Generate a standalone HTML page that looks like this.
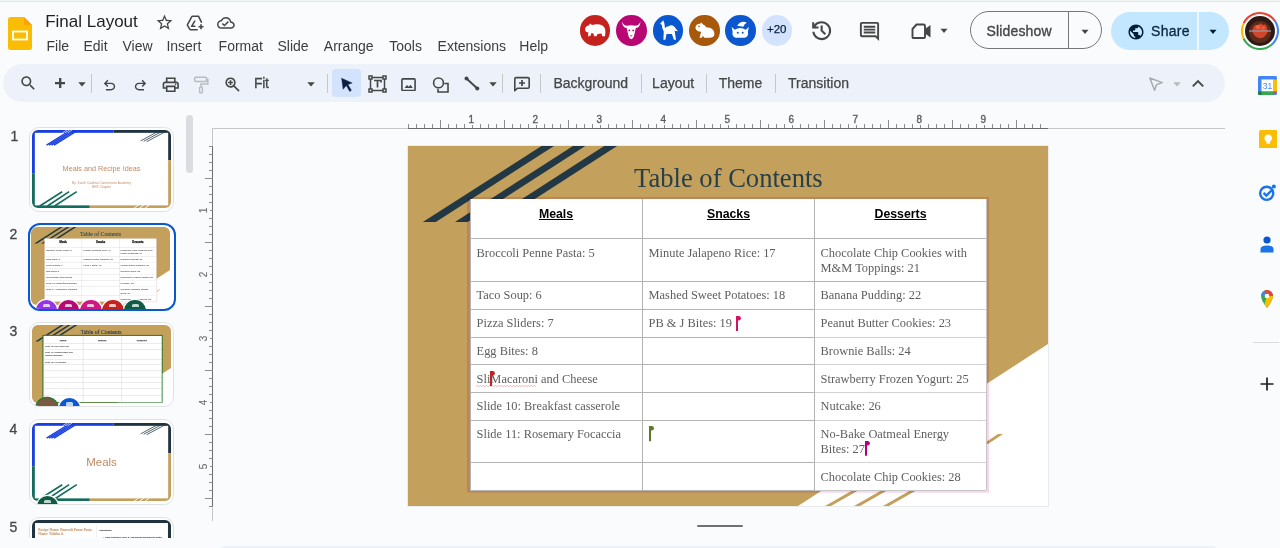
<!DOCTYPE html>
<html><head><meta charset="utf-8"><title>Final Layout - Google Slides</title>
<style>
html,body{margin:0;padding:0;-webkit-font-smoothing:antialiased;}
body{width:1280px;height:548px;overflow:hidden;position:relative;background:#f9fbfd;font-family:'Liberation Sans', sans-serif;}
.r{position:absolute;}
.t{position:absolute;white-space:nowrap;}
</style></head><body>
<div style="position:absolute;left:0;top:0;width:1280px;height:548px;will-change:transform;"><div class="r" style="left:0px;top:0px;width:1280px;height:1px;background:#f1f7f4;"></div><div class="r" style="left:0px;top:1px;width:1280px;height:1px;background:#dfe6e4;"></div><svg class="r" style="left:8px;top:17px;" width="24" height="33" viewBox="0 0 24 33"><path d="M0 2.5 Q0 0 2.5 0 L16 0 L24 8 L24 30.5 Q24 33 21.5 33 L2.5 33 Q0 33 0 30.5 Z" fill="#fbbc04"/>
<path d="M16 0 L24 8 L16 8 Z" fill="#f9a300"/>
<rect x="5" y="14.5" width="14" height="8" fill="none" stroke="#fff" stroke-width="1.8"/></svg><div class="t" style="left:45.2px;top:12.91px;font-size:17px;line-height:17px;color:#1f1f1f;font-weight:normal;font-family:'Liberation Sans', sans-serif;">Final Layout</div><svg class="r" style="left:155px;top:13px;" width="19" height="19" viewBox="0 0 24 24"><path fill="#444746" d="M22 9.24l-7.19-.62L12 2 9.19 8.63 2 9.24l5.46 4.73L5.82 21 12 17.27 18.18 21l-1.63-7.03L22 9.24zM12 15.4l-3.76 2.27 1-4.28-3.32-2.88 4.38-.38L12 6.1l1.71 4.04 4.38.38-3.32 2.88 1 4.28L12 15.4z"/></svg><svg class="r" style="left:186px;top:15px;" width="18" height="16" viewBox="0 0 18 16"><path d="M12.6 1.3 H6.4 Q6 1.3 5.8 1.7 L1.5 9.6 Q1.3 10 1.5 10.4 L3.9 14.3 Q4.1 14.7 4.5 14.7 H11.2 M12.6 1.3 L15.4 7.2" fill="none" stroke="#444746" stroke-width="1.55" stroke-linejoin="round" stroke-linecap="round"/>
<path d="M9 5.6 L5.6 11.3 H9.4" fill="none" stroke="#444746" stroke-width="1.5" stroke-linejoin="round"/>
<path d="M15 9.2 V14.3 M12.5 11.75 H17.5" stroke="#444746" stroke-width="1.6"/></svg><svg class="r" style="left:216.8px;top:14.2px;" width="17.8" height="17.8" viewBox="0 0 24 24"><path fill="#444746" d="M19.35 10.04C18.67 6.59 15.64 4 12 4 9.11 4 6.6 5.64 5.35 8.04 2.34 8.36 0 10.91 0 14c0 3.310 2.69 6 6 6h13c2.76 0 5-2.24 5-5 0-2.64-2.05-4.78-4.65-4.960zM19 18H6c-2.21 0-4-1.79-4-4 0-2.05 1.53-3.76 3.56-3.97l1.07-.11.5-.95C8.08 7.14 9.94 6 12 6c2.62 0 4.88 1.86 5.39 4.43l.3 1.5 1.53.11c1.56.1 2.78 1.410 2.78 2.96 0 1.65-1.35 3-3 3zm-9-3.82l-2.09-2.09L6.5 13.5 10 17l6.01-6.01-1.41-1.41z"/></svg><div class="t" style="left:46.5px;top:38.85px;font-size:14px;line-height:14px;color:#3b3e3d;font-weight:normal;font-family:'Liberation Sans', sans-serif;">File</div><div class="t" style="left:83.5px;top:38.85px;font-size:14px;line-height:14px;color:#3b3e3d;font-weight:normal;font-family:'Liberation Sans', sans-serif;">Edit</div><div class="t" style="left:122.5px;top:38.85px;font-size:14px;line-height:14px;color:#3b3e3d;font-weight:normal;font-family:'Liberation Sans', sans-serif;">View</div><div class="t" style="left:166.4px;top:38.85px;font-size:14px;line-height:14px;color:#3b3e3d;font-weight:normal;font-family:'Liberation Sans', sans-serif;">Insert</div><div class="t" style="left:218.60000000000002px;top:38.85px;font-size:14px;line-height:14px;color:#3b3e3d;font-weight:normal;font-family:'Liberation Sans', sans-serif;">Format</div><div class="t" style="left:277.5px;top:38.85px;font-size:14px;line-height:14px;color:#3b3e3d;font-weight:normal;font-family:'Liberation Sans', sans-serif;">Slide</div><div class="t" style="left:323.8px;top:38.85px;font-size:14px;line-height:14px;color:#3b3e3d;font-weight:normal;font-family:'Liberation Sans', sans-serif;">Arrange</div><div class="t" style="left:389.3px;top:38.85px;font-size:14px;line-height:14px;color:#3b3e3d;font-weight:normal;font-family:'Liberation Sans', sans-serif;">Tools</div><div class="t" style="left:437.55px;top:38.85px;font-size:14px;line-height:14px;color:#3b3e3d;font-weight:normal;font-family:'Liberation Sans', sans-serif;">Extensions</div><div class="t" style="left:519.3px;top:38.85px;font-size:14px;line-height:14px;color:#3b3e3d;font-weight:normal;font-family:'Liberation Sans', sans-serif;">Help</div><div class="r" style="left:579.75px;top:15.4px;width:30.5px;height:30.5px;border-radius:50%;background:#c5221f;"></div><div class="r" style="left:616.25px;top:15.4px;width:30.5px;height:30.5px;border-radius:50%;background:#b80672;"></div><div class="r" style="left:652.75px;top:15.4px;width:30.5px;height:30.5px;border-radius:50%;background:#0b57d0;"></div><div class="r" style="left:689.25px;top:15.4px;width:30.5px;height:30.5px;border-radius:50%;background:#a8580a;"></div><div class="r" style="left:725.45px;top:15.4px;width:30.5px;height:30.5px;border-radius:50%;background:#0b57d0;"></div><svg class="r" style="left:579.75px;top:15.4px;" width="30.5" height="30.5" viewBox="0 0 30 30"><path fill="#fff" d="M5 14.5 Q5 10.5 9 10 L10 8.3 L11.8 9.8 Q18 8.3 22 10.3 Q25.2 12.5 25 17 L24.6 20.8 L21.8 20.8 L21.2 18.3 L17.2 18.8 L16.6 20.8 L13.8 20.8 L13.2 18.3 L11.2 17.8 L10.3 20.8 L7.8 20.8 L8.2 17 Q5.4 17 5 14.5 Z"/><path d="M9 20.8 H14 M16 20.8 H21" stroke="#c5221f" stroke-width="0.8"/></svg><svg class="r" style="left:616.25px;top:15.4px;" width="30.5" height="30.5" viewBox="0 0 30 30"><path fill="#fff" d="M6 6.3 Q6 12.3 10.5 12.8 L12 19.5 Q13 23.8 15 23.8 Q17 23.8 18 19.5 L19.5 12.8 Q24 12.3 24 6.3 Q22.5 10.6 19 10.6 Q15 9.6 11 10.6 Q7.5 10.6 6 6.3 Z"/><circle cx="13.1" cy="15.2" r=".9" fill="#b80672"/><circle cx="16.9" cy="15.2" r=".9" fill="#b80672"/><path d="M14 20.5 H16" stroke="#b80672" stroke-width="0.9"/></svg><svg class="r" style="left:652.75px;top:15.4px;" width="30.5" height="30.5" viewBox="0 0 30 30"><path fill="#fff" d="M7 8.5 L10 5.2 L11.2 8 L11.8 13 Q13 11 15.5 11 Q18 8.8 20.8 11.3 L24.5 16 L21.3 15.6 L22.6 24.3 L20.6 24.3 L18.6 18.6 L13.3 18.6 L12.2 24.3 L10.2 24.3 L10.6 16.3 Q8.5 13 8.8 9.8 Z"/></svg><svg class="r" style="left:689.25px;top:15.4px;" width="30.5" height="30.5" viewBox="0 0 30 30"><path fill="#fff" d="M6.3 12.5 Q6.8 8.5 10.8 8.5 L12.3 7.3 L13.5 9 Q16 10 17 12 Q24.2 12 25 18 Q25.2 22.3 21 22.3 L15 22.3 L13.6 20.3 L12.6 22.3 L10.4 22.3 L12 16.5 Q7 16.2 6.3 12.5 Z"/><circle cx="9.8" cy="11.2" r=".8" fill="#a8580a"/></svg><svg class="r" style="left:725.45px;top:15.4px;" width="30.5" height="30.5" viewBox="0 0 30 30"><path fill="#fff" d="M9.5 14.5 Q15 11 20.5 14.5 L23.5 11.5 L22.5 16.5 Q23.5 21.5 19.5 22.3 L10.5 22.3 Q6.5 21.5 7.5 16.5 L6.5 11.5 Z M12 10.5 Q15.5 5 21.5 7.5 Q19 8.5 18 11.5 Z M7 23.5 L11 22 M23 23.5 L19 22"/><circle cx="12.6" cy="17.5" r="1" fill="#0b57d0"/><circle cx="17.4" cy="17.5" r="1" fill="#0b57d0"/></svg><div class="r" style="left:761.5px;top:15.4px;width:30.5px;height:30.5px;border-radius:50%;background:#d3e3fd;"></div><div class="t" style="left:761.5px;width:30.5px;text-align:center;top:24.37px;font-size:11.5px;line-height:11.5px;color:#041e49;-webkit-text-stroke:0.25px #041e49;">+20</div><svg class="r" style="left:808.8px;top:17.6px;" width="25.3" height="25.3" viewBox="0 -960 960 960"><path fill="#444746" d="M480-120q-138 0-240.5-91.5T122-440h82q14 104 92.5 172T480-200q117 0 198.5-81.5T760-480q0-117-81.5-198.5T480-760q-69 0-129 32t-101 88h110v80H120v-240h80v94q51-64 124.5-99T480-840q75 0 140.5 28.5t114 77q48.5 48.5 77 114T840-480q0 75-28.5 140.5t-77 114q-48.5 48.5-114 77T480-120Zm112-192L440-464v-216h80v184l128 128-56 56Z"/></svg><svg class="r" style="left:858px;top:20px;" width="23" height="23" viewBox="0 0 24 24"><path fill="#444746" d="M21.99 4c0-1.1-.89-2-1.99-2H4c-1.1 0-2 .9-2 2v12c0 1.1.9 2 2 2h14l4 4-.01-18zM20 4v13.17L18.83 16H4V4h16zM6 12h12v2H6zm0-3h12v2H6zm0-3h12v2H6z"/></svg><svg class="r" style="left:911px;top:23px;" width="21" height="17" viewBox="0 0 21 17"><path d="M5.5 1.5 H12.5 Q14 1.5 14 3 V14 Q14 15 13 15 H2.5 Q1.5 15 1.5 14 V6 Z" fill="none" stroke="#444746" stroke-width="1.9" stroke-linejoin="round"/><path d="M14 6 L19.5 2 V14.5 L14 10.5 Z" fill="#444746"/></svg><svg class="r" style="left:940.3px;top:27.8px;" width="8" height="6" viewBox="0 0 8 6"><path d="M0.5 0.8 L7.5 0.8 L4 5 Z" fill="#444746"/></svg><div class="r" style="left:969.8px;top:11.2px;width:132.5px;height:38.2px;box-sizing:border-box;border:1px solid #747775;border-radius:19px;"></div><div class="r" style="left:1068.3px;top:11.5px;width:1px;height:37.5px;background:#747775;"></div><div class="t" style="left:986.5px;top:24.15px;font-size:14px;line-height:14px;color:#444746;font-weight:normal;font-family:'Liberation Sans', sans-serif;letter-spacing:0.15px;-webkit-text-stroke:0.35px #444746;">Slideshow</div><svg class="r" style="left:1081px;top:28.6px;" width="8" height="6" viewBox="0 0 8 6"><path d="M0.5 0.8 L7.5 0.8 L4 5 Z" fill="#444746"/></svg><div class="r" style="left:1110.5px;top:11.5px;width:118.5px;height:38px;border-radius:19px;background:#c2e7ff;"></div><div class="r" style="left:1197px;top:11.5px;width:1.5px;height:38px;background:#f9fbfd;opacity:0.8;"></div><svg class="r" style="left:1127px;top:22.5px;" width="18" height="18" viewBox="0 0 24 24"><path fill="#001d35" d="M12 2C6.48 2 2 6.48 2 12s4.48 10 10 10 10-4.48 10-10S17.52 2 12 2zm-1 17.93c-3.95-.49-7-3.85-7-7.93 0-.62.08-1.21.21-1.79L9 15v1c0 1.1.9 2 2 2v1.93zm6.9-2.54c-.26-.81-1-1.39-1.9-1.39h-1v-3c0-.55-.45-1-1-1H8v-2h2c.55 0 1-.45 1-1V7h2c1.1 0 2-.9 2-2v-.41c2.93 1.19 5 4.06 5 7.41 0 2.08-.8 3.97-2.1 5.39z"/></svg><div class="t" style="left:1151px;top:24.15px;font-size:14px;line-height:14px;color:#0a2540;font-weight:normal;font-family:'Liberation Sans', sans-serif;letter-spacing:0.3px;-webkit-text-stroke:0.3px #0a2540;">Share</div><svg class="r" style="left:1209px;top:28.6px;" width="8" height="6" viewBox="0 0 8 6"><path d="M0.5 0.8 L7.5 0.8 L4 5 Z" fill="#001d35"/></svg><svg class="r" style="left:1240px;top:10.6px;" width="40" height="40" viewBox="0 0 40 40"><g fill="none" stroke-width="2.1">
<circle cx="20" cy="20" r="18" stroke="#ea4335" stroke-dasharray="37.7 200" transform="rotate(205 20 20)"/>
<circle cx="20" cy="20" r="18" stroke="#4285f4" stroke-dasharray="26.7 200" transform="rotate(325 20 20)"/>
<circle cx="20" cy="20" r="18" stroke="#34a853" stroke-dasharray="33 200" transform="rotate(50 20 20)"/>
<circle cx="20" cy="20" r="18" stroke="#fbbc04" stroke-dasharray="15.8 200" transform="rotate(155 20 20)"/>
</g>
<circle cx="20" cy="20" r="15" fill="#2e1a14"/>
<circle cx="20" cy="21" r="11" fill="#5a2a1a"/>
<path d="M13 17 Q15 12 18 15 Q20 10 23 14 Q26 12 27 17 Q29 22 24 26 Q20 29 15 25 Q11 21 13 17 Z" fill="#d2452a"/>
<path d="M9 20 H31" stroke="#9a9aa8" stroke-width="1.6" opacity="0.8"/>
<circle cx="18" cy="16" r="2.2" fill="#f06040"/><circle cx="23" cy="17" r="2" fill="#e85a38"/></svg><div class="r" style="left:3px;top:64px;width:1222px;height:38px;border-radius:19px;background:#edf2fa;"></div><svg class="r" style="left:19.2px;top:74.2px;" width="18.5" height="18.5" viewBox="0 0 24 24"><path fill="#444746" d="M15.5 14h-.79l-.28-.27C15.41 12.59 16 11.11 16 9.5 16 5.91 13.09 3 9.5 3S3 5.91 3 9.5 5.91 16 9.5 16c1.61 0 3.09-.59 4.23-1.57l.27.28v.79l5 4.99L20.49 19l-4.99-5zm-6 0C7.01 14 5 11.99 5 9.5S7.01 5 9.5 5 14 7.01 14 9.5 11.99 14 9.5 14z"/></svg><svg class="r" style="left:55px;top:78px;" width="10.4" height="10.4" viewBox="0 0 10.4 10.4"><path d="M0 5.2 H10.4 M5.2 0 V10.4" stroke="#444746" stroke-width="2.3"/></svg><svg class="r" style="left:77.5px;top:81.8px;" width="8" height="5" viewBox="0 0 8 5"><path d="M0.3 0.3 L7.7 0.3 L4 4.6 Z" fill="#444746"/></svg><div class="r" style="left:91px;top:73.5px;width:1px;height:19px;background:#c7c7c7;"></div><svg class="r" style="left:101.2px;top:76.5px;" width="17" height="17" viewBox="0 -960 960 960"><path fill="#444746" d="M280-200v-80h284q63 0 109.5-40T720-420q0-60-46.5-100T564-560H312l104 104-56 56-200-200 200-200 56 56-104 104h252q97 0 166.5 63T800-420q0 94-69.5 157T564-200H280Z"/></svg><svg class="r" style="left:132.3px;top:76.5px;" width="17" height="17" viewBox="0 -960 960 960"><path fill="#444746" d="M396-200q-97 0-166.5-63T160-420q0-94 69.5-157T396-640h252L544-744l56-56 200 200-200 200-56-56 104-104H396q-63 0-109.5 40T240-420q0 60 46.5 100T396-280h284v80H396Z"/></svg><svg class="r" style="left:161.3px;top:74.5px;" width="19.5" height="19.5" viewBox="0 0 24 24"><path fill="#444746" d="M19 8h-1V3H6v5H5c-1.66 0-3 1.34-3 3v6h4v4h12v-4h4v-6c0-1.66-1.34-3-3-3zM8 5h8v3H8V5zm8 12v2H8v-4h8v2zm2-2v-2H6v2H4v-4c0-.55.45-1 1-1h14c.55 0 1 .45 1 1v4h-2z"/><circle cx="18" cy="11.5" r="1" fill="#444746"/></svg><svg class="r" style="left:193px;top:76px;" width="16" height="18" viewBox="0 0 16 18"><rect x="1.6" y="1.2" width="12" height="4.2" rx="1.2" fill="none" stroke="#b9bcbf" stroke-width="1.5"/><path d="M13.6 3.3 H14.8 V7.9 H8 V10.8" fill="none" stroke="#b9bcbf" stroke-width="1.5"/><rect x="6.6" y="11" width="2.8" height="5.8" rx="0.8" fill="none" stroke="#b9bcbf" stroke-width="1.4"/></svg><svg class="r" style="left:222.5px;top:75px;" width="19" height="19" viewBox="0 -960 960 960"><path fill="#444746" d="M784-120 532-372q-30 24-69 38t-83 14q-109 0-184.5-75.5T120-580q0-109 75.5-184.5T380-840q109 0 184.5 75.5T640-580q0 44-14 83t-38 69l252 252-56 56ZM380-400q75 0 127.5-52.5T560-580q0-75-52.5-127.5T380-760q-75 0-127.5 52.5T200-580q0 75 52.5 127.5T380-400Zm-40-60v-80h-80v-80h80v-80h80v80h80v80h-80v80h-80Z"/></svg><div class="t" style="left:254px;top:76.15px;font-size:14px;line-height:14px;color:#444746;font-weight:normal;font-family:'Liberation Sans', sans-serif;letter-spacing:-0.3px;-webkit-text-stroke:0.3px #444746;">Fit</div><svg class="r" style="left:307px;top:82px;" width="8" height="5" viewBox="0 0 8 5"><path d="M0.3 0.3 L7.7 0.3 L4 4.6 Z" fill="#444746"/></svg><div class="r" style="left:327px;top:73.5px;width:1px;height:19px;background:#c7c7c7;"></div><div class="r" style="left:332px;top:69px;width:28.5px;height:28.3px;border-radius:4px;background:#d3e3fd;"></div><svg class="r" style="left:340px;top:76.5px;" width="14" height="17" viewBox="0 0 14 17"><path d="M1.6 1.2 L12.2 6.1 L7.9 7.5 L11.4 13.3 L9.7 14.4 L6.3 8.6 L3.1 12.3 Z" fill="#0b1f44" stroke="#0b1f44" stroke-width="0.4" stroke-linejoin="round"/></svg><svg class="r" style="left:367.5px;top:75px;" width="19" height="18" viewBox="0 0 19 18"><g fill="none" stroke="#444746" stroke-width="1.5"><rect x="1" y="1" width="3" height="3"/><rect x="15" y="1" width="3" height="3"/><rect x="1" y="14" width="3" height="3"/><rect x="15" y="14" width="3" height="3"/><path d="M2.5 4 V14 M16.5 4 V14 M4 2.5 H15 M4 15.5 H15"/></g><path d="M6 5.5 H13 V7.5 M9.5 5.5 V12.5" fill="none" stroke="#444746" stroke-width="1.7"/></svg><svg class="r" style="left:401px;top:77.5px;" width="15" height="13.5" viewBox="0 0 15 13.5"><rect x="0.9" y="0.9" width="13.2" height="11.7" rx="1" fill="none" stroke="#444746" stroke-width="1.6"/><path d="M3.5 10 L6 7 L7.8 8.8 L9.5 6.8 L11.8 10 Z" fill="#444746"/></svg><svg class="r" style="left:432px;top:76.5px;" width="18" height="16" viewBox="0 0 18 16"><circle cx="6.5" cy="5.9" r="4.9" fill="none" stroke="#444746" stroke-width="1.6"/><path d="M12.3 6.5 H16 V15 H6 V11.8" fill="none" stroke="#444746" stroke-width="1.6"/></svg><svg class="r" style="left:464px;top:76px;" width="16" height="15" viewBox="0 0 16 15"><path d="M2.5 2.5 L13.3 12.5" stroke="#444746" stroke-width="1.9"/><circle cx="2.5" cy="2.5" r="2" fill="#444746"/><circle cx="13.3" cy="12.5" r="2" fill="#444746"/></svg><svg class="r" style="left:488.5px;top:82.3px;" width="8" height="5" viewBox="0 0 8 5"><path d="M0.3 0.3 L7.7 0.3 L4 4.6 Z" fill="#444746"/></svg><div class="r" style="left:502px;top:73.5px;width:1px;height:19px;background:#c7c7c7;"></div><svg class="r" style="left:512.5px;top:76px;" width="18" height="17" viewBox="0 0 18 17"><path d="M1.8 14.8 V2.8 Q1.8 1.6 3 1.6 H15 Q16.2 1.6 16.2 2.8 V11 Q16.2 12.2 15 12.2 H4.4 Z" fill="none" stroke="#444746" stroke-width="1.6" stroke-linejoin="round"/><path d="M9 4 V10 M6 7 H12" stroke="#444746" stroke-width="1.7"/></svg><div class="r" style="left:539.5px;top:73.5px;width:1px;height:19px;background:#c7c7c7;"></div><div class="t" style="left:553.4px;top:76.15px;font-size:14px;line-height:14px;color:#444746;font-weight:normal;font-family:'Liberation Sans', sans-serif;-webkit-text-stroke:0.25px #444746;">Background</div><div class="t" style="left:652.1px;top:76.15px;font-size:14px;line-height:14px;color:#444746;font-weight:normal;font-family:'Liberation Sans', sans-serif;-webkit-text-stroke:0.25px #444746;">Layout</div><div class="t" style="left:718.7px;top:76.15px;font-size:14px;line-height:14px;color:#444746;font-weight:normal;font-family:'Liberation Sans', sans-serif;-webkit-text-stroke:0.25px #444746;">Theme</div><div class="t" style="left:788px;top:76.15px;font-size:14px;line-height:14px;color:#444746;font-weight:normal;font-family:'Liberation Sans', sans-serif;-webkit-text-stroke:0.25px #444746;">Transition</div><div class="r" style="left:641px;top:73.5px;width:1px;height:19px;background:#c7c7c7;"></div><div class="r" style="left:705.5px;top:73.5px;width:1px;height:19px;background:#c7c7c7;"></div><div class="r" style="left:774.5px;top:73.5px;width:1px;height:19px;background:#c7c7c7;"></div><svg class="r" style="left:1148px;top:76px;" width="16" height="16" viewBox="0 0 16 16"><path d="M1.8 2 L14.3 6.6 L8.6 8.6 L6.6 14.3 Z" fill="none" stroke="#a8abae" stroke-width="1.5" stroke-linejoin="round"/></svg><svg class="r" style="left:1172.5px;top:82px;" width="8" height="5" viewBox="0 0 8 5"><path d="M0.3 0.3 L7.7 0.3 L4 4.6 Z" fill="#b7b9bb"/></svg><svg class="r" style="left:1191px;top:78px;" width="14" height="10" viewBox="0 0 14 10"><path d="M1.8 8.3 L7 3 L12.2 8.3" fill="none" stroke="#444746" stroke-width="1.9"/></svg><svg class="r" style="left:1257.5px;top:75.5px;" width="19" height="19" viewBox="0 0 19 19"><rect x="0" y="0" width="19" height="19" rx="1.5" fill="#4285f4"/>
<rect x="3.5" y="3.5" width="12" height="12" fill="#fff"/>
<path d="M15.5 3.5 H19 V15.5 H15.5 Z" fill="#fbbc04"/>
<path d="M3.5 15.5 H15.5 V19 H3.5 Z" fill="#34a853"/>
<path d="M0 15.5 H3.5 V19 H1.5 Q0 19 0 17.5 Z" fill="#188038"/>
<path d="M15.5 15.5 H19 L15.5 19 Z" fill="#ea4335"/>
<text x="9.5" y="13.2" font-size="8.5" font-family="Liberation Sans" fill="#4285f4" text-anchor="middle">31</text></svg><svg class="r" style="left:1258.5px;top:129.5px;" width="18.5" height="18.5" viewBox="0 0 18 18"><rect width="18" height="18" rx="2" fill="#fbbc04"/><circle cx="9" cy="8" r="3.6" fill="#fff"/><rect x="7.2" y="11" width="3.6" height="2.2" fill="#fff"/></svg><svg class="r" style="left:1257.5px;top:183px;" width="19" height="19" viewBox="0 0 24 24"><circle cx="11" cy="13" r="8.3" fill="none" stroke="#1a73e8" stroke-width="3"/><path d="M7 12.5 L10.5 16 L18 8.5" fill="none" stroke="#1a73e8" stroke-width="3"/><circle cx="20" cy="4.5" r="2.6" fill="#1a73e8"/></svg><svg class="r" style="left:1260px;top:236px;" width="14" height="17" viewBox="0 0 14 17"><circle cx="7" cy="4" r="3.6" fill="#0b57d0"/><path d="M0.5 16.5 V13 Q0.5 9.5 7 9.5 Q13.5 9.5 13.5 13 V16.5 Z" fill="#1a73e8"/></svg><svg class="r" style="left:1260px;top:289px;" width="14" height="20" viewBox="0 0 14 20"><path d="M7 19 Q1 11 1 7 A6 6 0 0 1 13 7 Q13 11 7 19 Z" fill="#34a853"/>
<path d="M1 7 A6 6 0 0 1 4 1.9 L7 7 Z" fill="#4285f4"/>
<path d="M4 1.9 A6 6 0 0 1 13 7 L7 7 Z" fill="#ea4335"/>
<path d="M13 7 Q13 11 7 19 L4.5 15 L7 7 Z" fill="#fbbc04"/>
<circle cx="7" cy="7" r="2.3" fill="#fff"/></svg><div class="r" style="left:1253px;top:342px;width:26px;height:1px;background:#dadce0;"></div><svg class="r" style="left:1260px;top:377px;" width="14" height="14" viewBox="0 0 14 14"><path d="M7 0.5 V13.5 M0.5 7 H13.5" stroke="#1f1f1f" stroke-width="1.7"/></svg><div class="r" style="left:408px;top:146px;width:640px;height:360px;box-shadow:0 0 0 0.5px rgba(120,120,120,0.25)"><div class="r" style="left:0;top:0;width:640px;height:360px;background:#c3a05c;overflow:hidden;"><svg class="r" style="left:0;top:0" width="640" height="360" viewBox="0 0 640 360">
<polygon points="390,360 640,198 640,360" fill="#ffffff"/>
<polygon points="133.5,0 146,0 27.8,76 14.9,76" fill="#223845"/>
<polygon points="165,0 177.3,0 59.5,76 47,76" fill="#223845"/>
<polygon points="196.2,0 209.1,0 91,76 78.5,76" fill="#223845"/>
<polygon points="417,360 423,360 451,344 445,344" fill="#c3a05c"/>
<polygon points="446,360 452,360 480,344 474,344" fill="#c3a05c"/>
<polygon points="475,360 481,360 509,344 503,344" fill="#c3a05c"/>
<polygon points="575,298 590,288 595,288 580,298" fill="#c3a05c"/>
</svg><div class="t" style="left:226.00px;top:18.52px;font-size:26.6px;line-height:26.6px;color:#273f4a;font-weight:normal;font-family:'Liberation Serif', serif;">Table of Contents</div><svg class="r" style="left:0;top:0;mix-blend-mode:multiply" width="640" height="360" viewBox="0 0 640 360"><rect x="60.4" y="52.4" width="519.2" height="292.8" fill="none" stroke="#f7d5ec" stroke-width="2.9"/></svg><div class="r" style="left:62.00px;top:53.00px;width:516px;height:291px;background:#fff;"></div><div class="r" style="left:62.00px;top:92.20px;width:345px;height:1px;background:#b4b4b4;"></div><div class="r" style="left:407.00px;top:92.20px;width:171px;height:1px;background:#b4b4b4;"></div><div class="r" style="left:62.00px;top:134.50px;width:345px;height:1px;background:#b4b4b4;"></div><div class="r" style="left:407.00px;top:134.50px;width:171px;height:1px;background:#b4b4b4;"></div><div class="r" style="left:62.00px;top:162.50px;width:345px;height:1px;background:#b4b4b4;"></div><div class="r" style="left:407.00px;top:162.50px;width:171px;height:1px;background:#d2d2d2;"></div><div class="r" style="left:62.00px;top:190.50px;width:345px;height:1px;background:#b4b4b4;"></div><div class="r" style="left:407.00px;top:190.50px;width:171px;height:1px;background:#d2d2d2;"></div><div class="r" style="left:62.00px;top:218.00px;width:345px;height:1px;background:#b4b4b4;"></div><div class="r" style="left:407.00px;top:218.00px;width:171px;height:1px;background:#d2d2d2;"></div><div class="r" style="left:62.00px;top:245.50px;width:345px;height:1px;background:#b4b4b4;"></div><div class="r" style="left:407.00px;top:245.50px;width:171px;height:1px;background:#d2d2d2;"></div><div class="r" style="left:62.00px;top:273.50px;width:345px;height:1px;background:#b4b4b4;"></div><div class="r" style="left:407.00px;top:273.50px;width:171px;height:1px;background:#d2d2d2;"></div><div class="r" style="left:62.00px;top:315.50px;width:345px;height:1px;background:#b4b4b4;"></div><div class="r" style="left:407.00px;top:315.50px;width:171px;height:1px;background:#d2d2d2;"></div><div class="r" style="left:62.00px;top:343.50px;width:345px;height:1px;background:#b4b4b4;"></div><div class="r" style="left:407.00px;top:343.50px;width:171px;height:1px;background:#c8c8c8;"></div><div class="r" style="left:233.50px;top:53.00px;width:1px;height:291px;background:#b4b4b4;"></div><div class="r" style="left:406.00px;top:53.00px;width:1px;height:291px;background:#b4b4b4;"></div><div class="r" style="left:62.00px;top:53.00px;width:1px;height:291px;background:#b4b4b4;"></div><div class="r" style="left:577.50px;top:53.00px;width:1px;height:291px;background:#c4c4c4;"></div><div class="t" style="left:88px;width:120px;text-align:center;top:61.79px;font-size:12.3px;line-height:12.3px;font-weight:bold;color:#000;text-decoration:underline;">Meals</div><div class="t" style="left:260.5px;width:120px;text-align:center;top:61.79px;font-size:12.3px;line-height:12.3px;font-weight:bold;color:#000;text-decoration:underline;">Snacks</div><div class="t" style="left:432.5px;width:120px;text-align:center;top:61.79px;font-size:12.3px;line-height:12.3px;font-weight:bold;color:#000;text-decoration:underline;">Desserts</div><div class="t" style="left:68.60px;top:100.81px;font-size:12.4px;line-height:12.4px;color:#5e5e5e;font-weight:normal;font-family:'Liberation Serif', serif;">Broccoli Penne Pasta: 5</div><div class="t" style="left:68.60px;top:143.12px;font-size:12.4px;line-height:12.4px;color:#5e5e5e;font-weight:normal;font-family:'Liberation Serif', serif;">Taco Soup: 6</div><div class="t" style="left:68.60px;top:171.12px;font-size:12.4px;line-height:12.4px;color:#5e5e5e;font-weight:normal;font-family:'Liberation Serif', serif;">Pizza Sliders: 7</div><div class="t" style="left:68.60px;top:199.12px;font-size:12.4px;line-height:12.4px;color:#5e5e5e;font-weight:normal;font-family:'Liberation Serif', serif;">Egg Bites: 8</div><div class="t" style="left:68.60px;top:226.62px;font-size:12.4px;line-height:12.4px;color:#5e5e5e;font-weight:normal;font-family:'Liberation Serif', serif;">SliMacaroni and Cheese</div><div class="t" style="left:68.60px;top:254.12px;font-size:12.4px;line-height:12.4px;color:#5e5e5e;font-weight:normal;font-family:'Liberation Serif', serif;">Slide 10: Breakfast casserole</div><div class="t" style="left:68.60px;top:282.12px;font-size:12.4px;line-height:12.4px;color:#5e5e5e;font-weight:normal;font-family:'Liberation Serif', serif;">Slide 11: Rosemary Focaccia</div><div class="t" style="left:240.60px;top:100.81px;font-size:12.4px;line-height:12.4px;color:#5e5e5e;font-weight:normal;font-family:'Liberation Serif', serif;">Minute Jalapeno Rice: 17</div><div class="t" style="left:240.60px;top:143.12px;font-size:12.4px;line-height:12.4px;color:#5e5e5e;font-weight:normal;font-family:'Liberation Serif', serif;">Mashed Sweet Potatoes: 18</div><div class="t" style="left:240.60px;top:171.12px;font-size:12.4px;line-height:12.4px;color:#5e5e5e;font-weight:normal;font-family:'Liberation Serif', serif;">PB &amp; J Bites: 19</div><div class="t" style="left:412.60px;top:100.81px;font-size:12.4px;line-height:12.4px;color:#5e5e5e;font-weight:normal;font-family:'Liberation Serif', serif;">Chocolate Chip Cookies with</div><div class="t" style="left:412.60px;top:143.12px;font-size:12.4px;line-height:12.4px;color:#5e5e5e;font-weight:normal;font-family:'Liberation Serif', serif;">Banana Pudding: 22</div><div class="t" style="left:412.60px;top:171.12px;font-size:12.4px;line-height:12.4px;color:#5e5e5e;font-weight:normal;font-family:'Liberation Serif', serif;">Peanut Butter Cookies: 23</div><div class="t" style="left:412.60px;top:199.12px;font-size:12.4px;line-height:12.4px;color:#5e5e5e;font-weight:normal;font-family:'Liberation Serif', serif;">Brownie Balls: 24</div><div class="t" style="left:412.60px;top:226.62px;font-size:12.4px;line-height:12.4px;color:#5e5e5e;font-weight:normal;font-family:'Liberation Serif', serif;">Strawberry Frozen Yogurt: 25</div><div class="t" style="left:412.60px;top:254.12px;font-size:12.4px;line-height:12.4px;color:#5e5e5e;font-weight:normal;font-family:'Liberation Serif', serif;">Nutcake: 26</div><div class="t" style="left:412.60px;top:282.12px;font-size:12.4px;line-height:12.4px;color:#5e5e5e;font-weight:normal;font-family:'Liberation Serif', serif;">No-Bake Oatmeal Energy</div><div class="t" style="left:412.60px;top:325.12px;font-size:12.4px;line-height:12.4px;color:#5e5e5e;font-weight:normal;font-family:'Liberation Serif', serif;">Chocolate Chip Cookies: 28</div><div class="t" style="left:412.60px;top:115.81px;font-size:12.4px;line-height:12.4px;color:#5e5e5e;font-weight:normal;font-family:'Liberation Serif', serif;">M&amp;M Toppings: 21</div><div class="t" style="left:412.60px;top:297.12px;font-size:12.4px;line-height:12.4px;color:#5e5e5e;font-weight:normal;font-family:'Liberation Serif', serif;">Bites: 27</div><svg class="r" style="left:327.80px;top:169.50px" width="6" height="15.5" viewBox="0 0 6 15.5"><rect x="0" y="0" width="2" height="15.5" rx="0.6" fill="#d4135e"/><path d="M0 0 H2.6 A2.3 2.3 0 0 1 2.6 4.6 H0 Z" fill="#d4135e"/></svg><svg class="r" style="left:81.90px;top:225.00px" width="6" height="15.0" viewBox="0 0 6 15.0"><rect x="0" y="0" width="2" height="15.0" rx="0.6" fill="#c5221f"/><path d="M0 0 H2.6 A2.3 2.3 0 0 1 2.6 4.6 H0 Z" fill="#c5221f"/></svg><svg class="r" style="left:240.60px;top:280.30px" width="6" height="15.3" viewBox="0 0 6 15.3"><rect x="0" y="0" width="2" height="15.3" rx="0.6" fill="#5b7a25"/><path d="M0 0 H2.6 A2.3 2.3 0 0 1 2.6 4.6 H0 Z" fill="#5b7a25"/></svg><svg class="r" style="left:456.80px;top:295.20px" width="6" height="14.8" viewBox="0 0 6 14.8"><rect x="0" y="0" width="2" height="14.8" rx="0.6" fill="#b5007e"/><path d="M0 0 H2.6 A2.3 2.3 0 0 1 2.6 4.6 H0 Z" fill="#b5007e"/></svg><svg class="r" style="left:68px;top:238.3px" width="62" height="4" viewBox="0 0 62 4"><path d="M0 2.8 L1.5 1.2 L3 2.8 L4.5 1.2 L6 2.8 L7.5 1.2 L9 2.8 L10.5 1.2 L12 2.8 L13.5 1.2 L15 2.8 L16.5 1.2 L18 2.8 L19.5 1.2 L21 2.8 L22.5 1.2 L24 2.8 L25.5 1.2 L27 2.8 L28.5 1.2 L30 2.8 L31.5 1.2 L33 2.8 L34.5 1.2 L36 2.8 L37.5 1.2 L39 2.8 L40.5 1.2 L42 2.8 L43.5 1.2 L45 2.8 L46.5 1.2 L48 2.8 L49.5 1.2 L51 2.8 L52.5 1.2 L54 2.8 L55.5 1.2 L57 2.8 L58.5 1.2 L60 2.8 " fill="none" stroke="#e06666" stroke-width="0.6" opacity="0.75"/></svg></div></div><div class="r" style="left:0;top:110px;width:200px;height:428px;overflow:hidden;"><div class="r" style="left:0;top:-110px;width:200px;height:548px;"><div class="r" style="left:28.8px;top:126.60px;width:145.6px;height:85.2px;box-sizing:border-box;border:1.2px solid #dfe1e3;border-radius:10px;background:#fff;overflow:hidden;"><div class="r" style="left:2.00px;top:2.40px;width:139px;height:78.2px;border-radius:6px;overflow:hidden;"><div class="r" style="left:0;top:0;width:640px;height:360px;transform:scale(0.21719,0.21722);transform-origin:0 0;"><div class="r" style="left:0;top:0;width:640px;height:360px;background:#fff;overflow:hidden;"><svg class="r" style="left:0;top:0" width="640" height="360" viewBox="0 0 640 360">
<rect x="0" y="0" width="375" height="13" fill="#1a3fe0"/>
<rect x="375" y="0" width="265" height="13" fill="#1f3440"/>
<rect x="0" y="0" width="13" height="199" fill="#1a3fe0"/>
<rect x="0" y="199" width="13" height="161" fill="#146c5c"/>
<rect x="0" y="347" width="266" height="13" fill="#146c5c"/>
<rect x="266" y="347" width="374" height="13" fill="#c4a05b"/>
<rect x="627" y="0" width="13" height="139" fill="#1f3440"/>
<rect x="627" y="139" width="13" height="221" fill="#c4a05b"/>
<g stroke="#1a3fe0" stroke-width="6.5"><line x1="67" y1="70" x2="179" y2="0"/><line x1="78.5" y1="70" x2="190.5" y2="0"/><line x1="90" y1="70" x2="202" y2="0"/><line x1="101.5" y1="70" x2="213.5" y2="0"/></g>
<g stroke="#fff" stroke-width="3"><line x1="140" y1="13" x2="161" y2="0"/><line x1="152" y1="13" x2="173" y2="0"/><line x1="164" y1="13" x2="185" y2="0"/></g>
<g stroke="#1f3440" stroke-width="3.5"><line x1="500" y1="50" x2="593" y2="0"/><line x1="514" y1="52" x2="607" y2="2"/><line x1="528" y1="54" x2="621" y2="4"/></g>
<g stroke="#146c5c" stroke-width="7.5"><line x1="36" y1="350" x2="139" y2="284"/><line x1="71" y1="350" x2="171" y2="284"/><line x1="104" y1="350" x2="206" y2="284"/></g>
<g stroke="#fff" stroke-width="4"><line x1="470" y1="360" x2="490" y2="346"/><line x1="495" y1="360" x2="515" y2="346"/><line x1="520" y1="360" x2="540" y2="346"/></g>
</svg><div class="t" style="left:0;width:640px;text-align:center;top:162px;font-size:33.4px;line-height:33.4px;color:#c08a62;">Meals and Recipe Ideas</div><div class="t" style="left:0;width:640px;text-align:center;top:232px;font-size:14px;line-height:20px;color:#c08a62;letter-spacing:0.3px;">By: South Carolina Connections Academy<br>NHS Chapter</div></div></div></div></div><div class="t" style="left:10.399999999999999px;top:129.35px;font-size:14px;line-height:14px;color:#444746;font-weight:normal;font-family:'Liberation Sans', sans-serif;-webkit-text-stroke:0.3px #444746;">1</div><div class="r" style="left:27.5px;top:223.00px;width:148.1px;height:87.5px;box-sizing:border-box;border:2.6px solid #0b57d0;border-radius:12px;background:#fff;overflow:hidden;"><div class="r" style="left:1.90px;top:2.00px;width:139px;height:78.2px;border-radius:6px;overflow:hidden;"><div class="r" style="left:0;top:0;width:640px;height:360px;transform:scale(0.21719,0.21722);transform-origin:0 0;"><div class="r" style="left:0;top:0;width:640px;height:360px;background:#c3a05c;overflow:hidden;"><svg class="r" style="left:0;top:0" width="640" height="360" viewBox="0 0 640 360">
<polygon points="390,360 640,198 640,360" fill="#ffffff"/>
<polygon points="133.5,0 146,0 27.8,76 14.9,76" fill="#223845"/>
<polygon points="165,0 177.3,0 59.5,76 47,76" fill="#223845"/>
<polygon points="196.2,0 209.1,0 91,76 78.5,76" fill="#223845"/>
<polygon points="417,360 423,360 451,344 445,344" fill="#c3a05c"/>
<polygon points="446,360 452,360 480,344 474,344" fill="#c3a05c"/>
<polygon points="475,360 481,360 509,344 503,344" fill="#c3a05c"/>
<polygon points="575,298 590,288 595,288 580,298" fill="#c3a05c"/>
</svg><div class="t" style="left:226.00px;top:18.52px;font-size:26.6px;line-height:26.6px;color:#273f4a;font-weight:normal;font-family:'Liberation Serif', serif;-webkit-text-stroke:0.4px #4a5a62;">Table of Contents</div><svg class="r" style="left:0;top:0;mix-blend-mode:multiply" width="640" height="360" viewBox="0 0 640 360"><rect x="60.4" y="52.4" width="519.2" height="292.8" fill="none" stroke="#f7d5ec" stroke-width="2.9"/></svg><div class="r" style="left:62.00px;top:53.00px;width:516px;height:291px;background:#fff;"></div><div class="r" style="left:62.00px;top:92.20px;width:345px;height:1px;background:#b4b4b4;"></div><div class="r" style="left:407.00px;top:92.20px;width:171px;height:1px;background:#b4b4b4;"></div><div class="r" style="left:62.00px;top:134.50px;width:345px;height:1px;background:#b4b4b4;"></div><div class="r" style="left:407.00px;top:134.50px;width:171px;height:1px;background:#b4b4b4;"></div><div class="r" style="left:62.00px;top:162.50px;width:345px;height:1px;background:#b4b4b4;"></div><div class="r" style="left:407.00px;top:162.50px;width:171px;height:1px;background:#d2d2d2;"></div><div class="r" style="left:62.00px;top:190.50px;width:345px;height:1px;background:#b4b4b4;"></div><div class="r" style="left:407.00px;top:190.50px;width:171px;height:1px;background:#d2d2d2;"></div><div class="r" style="left:62.00px;top:218.00px;width:345px;height:1px;background:#b4b4b4;"></div><div class="r" style="left:407.00px;top:218.00px;width:171px;height:1px;background:#d2d2d2;"></div><div class="r" style="left:62.00px;top:245.50px;width:345px;height:1px;background:#b4b4b4;"></div><div class="r" style="left:407.00px;top:245.50px;width:171px;height:1px;background:#d2d2d2;"></div><div class="r" style="left:62.00px;top:273.50px;width:345px;height:1px;background:#b4b4b4;"></div><div class="r" style="left:407.00px;top:273.50px;width:171px;height:1px;background:#d2d2d2;"></div><div class="r" style="left:62.00px;top:315.50px;width:345px;height:1px;background:#b4b4b4;"></div><div class="r" style="left:407.00px;top:315.50px;width:171px;height:1px;background:#d2d2d2;"></div><div class="r" style="left:62.00px;top:343.50px;width:345px;height:1px;background:#b4b4b4;"></div><div class="r" style="left:407.00px;top:343.50px;width:171px;height:1px;background:#c8c8c8;"></div><div class="r" style="left:233.50px;top:53.00px;width:1px;height:291px;background:#b4b4b4;"></div><div class="r" style="left:406.00px;top:53.00px;width:1px;height:291px;background:#b4b4b4;"></div><div class="r" style="left:62.00px;top:53.00px;width:1px;height:291px;background:#b4b4b4;"></div><div class="r" style="left:577.50px;top:53.00px;width:1px;height:291px;background:#c4c4c4;"></div><div class="t" style="left:88px;width:120px;text-align:center;top:61.79px;font-size:12.3px;line-height:12.3px;font-weight:bold;color:#000;text-decoration:underline;-webkit-text-stroke:0.8px #222;">Meals</div><div class="t" style="left:260.5px;width:120px;text-align:center;top:61.79px;font-size:12.3px;line-height:12.3px;font-weight:bold;color:#000;text-decoration:underline;-webkit-text-stroke:0.8px #222;">Snacks</div><div class="t" style="left:432.5px;width:120px;text-align:center;top:61.79px;font-size:12.3px;line-height:12.3px;font-weight:bold;color:#000;text-decoration:underline;-webkit-text-stroke:0.8px #222;">Desserts</div><div class="t" style="left:68.60px;top:100.81px;font-size:12.4px;line-height:12.4px;color:#555;font-weight:normal;font-family:'Liberation Serif', serif;-webkit-text-stroke:0.6px #888;">Broccoli Penne Pasta: 5</div><div class="t" style="left:68.60px;top:143.12px;font-size:12.4px;line-height:12.4px;color:#555;font-weight:normal;font-family:'Liberation Serif', serif;-webkit-text-stroke:0.6px #888;">Taco Soup: 6</div><div class="t" style="left:68.60px;top:171.12px;font-size:12.4px;line-height:12.4px;color:#555;font-weight:normal;font-family:'Liberation Serif', serif;-webkit-text-stroke:0.6px #888;">Pizza Sliders: 7</div><div class="t" style="left:68.60px;top:199.12px;font-size:12.4px;line-height:12.4px;color:#555;font-weight:normal;font-family:'Liberation Serif', serif;-webkit-text-stroke:0.6px #888;">Egg Bites: 8</div><div class="t" style="left:68.60px;top:226.62px;font-size:12.4px;line-height:12.4px;color:#555;font-weight:normal;font-family:'Liberation Serif', serif;-webkit-text-stroke:0.6px #888;">SliMacaroni and Cheese</div><div class="t" style="left:68.60px;top:254.12px;font-size:12.4px;line-height:12.4px;color:#555;font-weight:normal;font-family:'Liberation Serif', serif;-webkit-text-stroke:0.6px #888;">Slide 10: Breakfast casserole</div><div class="t" style="left:68.60px;top:282.12px;font-size:12.4px;line-height:12.4px;color:#555;font-weight:normal;font-family:'Liberation Serif', serif;-webkit-text-stroke:0.6px #888;">Slide 11: Rosemary Focaccia</div><div class="t" style="left:240.60px;top:100.81px;font-size:12.4px;line-height:12.4px;color:#555;font-weight:normal;font-family:'Liberation Serif', serif;-webkit-text-stroke:0.6px #888;">Minute Jalapeno Rice: 17</div><div class="t" style="left:240.60px;top:143.12px;font-size:12.4px;line-height:12.4px;color:#555;font-weight:normal;font-family:'Liberation Serif', serif;-webkit-text-stroke:0.6px #888;">Mashed Sweet Potatoes: 18</div><div class="t" style="left:240.60px;top:171.12px;font-size:12.4px;line-height:12.4px;color:#555;font-weight:normal;font-family:'Liberation Serif', serif;-webkit-text-stroke:0.6px #888;">PB &amp; J Bites: 19</div><div class="t" style="left:412.60px;top:100.81px;font-size:12.4px;line-height:12.4px;color:#555;font-weight:normal;font-family:'Liberation Serif', serif;-webkit-text-stroke:0.6px #888;">Chocolate Chip Cookies with</div><div class="t" style="left:412.60px;top:143.12px;font-size:12.4px;line-height:12.4px;color:#555;font-weight:normal;font-family:'Liberation Serif', serif;-webkit-text-stroke:0.6px #888;">Banana Pudding: 22</div><div class="t" style="left:412.60px;top:171.12px;font-size:12.4px;line-height:12.4px;color:#555;font-weight:normal;font-family:'Liberation Serif', serif;-webkit-text-stroke:0.6px #888;">Peanut Butter Cookies: 23</div><div class="t" style="left:412.60px;top:199.12px;font-size:12.4px;line-height:12.4px;color:#555;font-weight:normal;font-family:'Liberation Serif', serif;-webkit-text-stroke:0.6px #888;">Brownie Balls: 24</div><div class="t" style="left:412.60px;top:226.62px;font-size:12.4px;line-height:12.4px;color:#555;font-weight:normal;font-family:'Liberation Serif', serif;-webkit-text-stroke:0.6px #888;">Strawberry Frozen Yogurt: 25</div><div class="t" style="left:412.60px;top:254.12px;font-size:12.4px;line-height:12.4px;color:#555;font-weight:normal;font-family:'Liberation Serif', serif;-webkit-text-stroke:0.6px #888;">Nutcake: 26</div><div class="t" style="left:412.60px;top:282.12px;font-size:12.4px;line-height:12.4px;color:#555;font-weight:normal;font-family:'Liberation Serif', serif;-webkit-text-stroke:0.6px #888;">No-Bake Oatmeal Energy</div><div class="t" style="left:412.60px;top:325.12px;font-size:12.4px;line-height:12.4px;color:#555;font-weight:normal;font-family:'Liberation Serif', serif;-webkit-text-stroke:0.6px #888;">Chocolate Chip Cookies: 28</div><div class="t" style="left:412.60px;top:115.81px;font-size:12.4px;line-height:12.4px;color:#555;font-weight:normal;font-family:'Liberation Serif', serif;-webkit-text-stroke:0.6px #888;">M&amp;M Toppings: 21</div><div class="t" style="left:412.60px;top:297.12px;font-size:12.4px;line-height:12.4px;color:#555;font-weight:normal;font-family:'Liberation Serif', serif;-webkit-text-stroke:0.6px #888;">Bites: 27</div></div></div></div><div class="r" style="left:6.40px;top:75.10px;width:21.60px;height:21.60px;border-radius:50%;background:#9334e6;box-shadow:0 0 0 1.2px #fff;"></div><div class="r" style="left:13.70px;top:78.90px;width:7px;height:3.5px;background:rgba(255,255,255,0.75);border-radius:1.5px 1.5px 0 0;"></div><div class="r" style="left:28.40px;top:75.10px;width:21.60px;height:21.60px;border-radius:50%;background:#b80672;box-shadow:0 0 0 1.2px #fff;"></div><div class="r" style="left:35.70px;top:78.90px;width:7px;height:3.5px;background:rgba(255,255,255,0.75);border-radius:1.5px 1.5px 0 0;"></div><div class="r" style="left:50.50px;top:75.10px;width:21.60px;height:21.60px;border-radius:50%;background:#d01884;box-shadow:0 0 0 1.2px #fff;"></div><div class="r" style="left:57.80px;top:78.90px;width:7px;height:3.5px;background:rgba(255,255,255,0.75);border-radius:1.5px 1.5px 0 0;"></div><div class="r" style="left:72.60px;top:75.10px;width:21.60px;height:21.60px;border-radius:50%;background:#c5221f;box-shadow:0 0 0 1.2px #fff;"></div><div class="r" style="left:79.90px;top:78.90px;width:7px;height:3.5px;background:rgba(255,255,255,0.75);border-radius:1.5px 1.5px 0 0;"></div><div class="r" style="left:94.80px;top:75.10px;width:21.60px;height:21.60px;border-radius:50%;background:#0f5b45;box-shadow:0 0 0 1.2px #fff;"></div><div class="r" style="left:102.10px;top:78.90px;width:7px;height:3.5px;background:rgba(255,255,255,0.75);border-radius:1.5px 1.5px 0 0;"></div></div><div class="t" style="left:9.6px;top:226.75px;font-size:14px;line-height:14px;color:#444746;font-weight:normal;font-family:'Liberation Sans', sans-serif;-webkit-text-stroke:0.3px #444746;">2</div><div class="r" style="left:28.8px;top:321.50px;width:145.6px;height:85.2px;box-sizing:border-box;border:1.2px solid #dfe1e3;border-radius:10px;background:#fff;overflow:hidden;"><div class="r" style="left:2.00px;top:2.40px;width:139px;height:78.2px;border-radius:6px;overflow:hidden;"><div class="r" style="left:0;top:0;width:640px;height:360px;transform:scale(0.21719,0.21722);transform-origin:0 0;"><div class="r" style="left:0;top:0;width:640px;height:360px;background:#c4a05b;overflow:hidden;"><svg class="r" style="left:0;top:0" width="640" height="360" viewBox="0 0 640 360">
<polygon points="390,360 640,198 640,360" fill="#fff"/>
<polygon points="133.5,0 146,0 27.8,76 14.9,76" fill="#223845"/>
<polygon points="165,0 177.3,0 59.5,76 47,76" fill="#223845"/>
<polygon points="196.2,0 209.1,0 91,76 78.5,76" fill="#223845"/>
</svg><div class="t" style="left:224px;top:19px;font-size:26.5px;line-height:30px;color:#233d4b;font-family:'Liberation Serif', serif;-webkit-text-stroke:0.6px #233d4b;">Table of Contents</div><div class="r" style="left:52px;top:50px;width:546px;height:306px;background:#fff;"></div><div class="r" style="left:52px;top:83px;width:546px;height:2px;background:#d0d0d0;"></div><div class="r" style="left:52px;top:113px;width:546px;height:2px;background:#d0d0d0;"></div><div class="r" style="left:52px;top:157px;width:546px;height:2px;background:#d0d0d0;"></div><div class="r" style="left:52px;top:181px;width:546px;height:2px;background:#d0d0d0;"></div><div class="r" style="left:52px;top:210px;width:546px;height:2px;background:#d0d0d0;"></div><div class="r" style="left:52px;top:239px;width:546px;height:2px;background:#d0d0d0;"></div><div class="r" style="left:52px;top:265px;width:546px;height:2px;background:#d0d0d0;"></div><div class="r" style="left:52px;top:292px;width:546px;height:2px;background:#d0d0d0;"></div><div class="r" style="left:52px;top:322px;width:546px;height:2px;background:#d0d0d0;"></div><div class="r" style="left:234px;top:50px;width:2px;height:306px;background:#d0d0d0;"></div><div class="r" style="left:412px;top:50px;width:2px;height:306px;background:#d0d0d0;"></div><svg class="r" style="left:0;top:0" width="640" height="360" viewBox="0 0 640 360"><defs><clipPath id="wt3"><polygon points="390,360 640,198 640,360"/></clipPath></defs>
<rect x="50" y="48" width="550" height="310" fill="none" stroke="#3e7e33" stroke-width="5"/>
<rect x="50" y="48" width="550" height="310" fill="none" stroke="#86b98a" stroke-width="5" clip-path="url(#wt3)"/></svg><div class="t" style="left:83px;width:120px;text-align:center;top:63px;font-size:11px;line-height:14px;font-weight:bold;color:#333;text-decoration:underline;-webkit-text-stroke:0.5px #555;">Meals</div><div class="t" style="left:263px;width:120px;text-align:center;top:63px;font-size:11px;line-height:14px;font-weight:bold;color:#333;text-decoration:underline;-webkit-text-stroke:0.5px #555;">Snacks</div><div class="t" style="left:445px;width:120px;text-align:center;top:63px;font-size:11px;line-height:14px;font-weight:bold;color:#333;text-decoration:underline;-webkit-text-stroke:0.5px #555;">Desserts</div><div class="t" style="left:60px;top:89px;font-size:11.5px;line-height:17px;color:#444;font-family:'Liberation Serif', serif;-webkit-text-stroke:0.6px #777;">Slide 12: Chili and Rice</div><div class="t" style="left:60px;top:116px;font-size:11.5px;line-height:17px;color:#444;font-family:'Liberation Serif', serif;-webkit-text-stroke:0.6px #777;">Slide 13: Mango Shake and<br>Banana Smoothie</div><div class="t" style="left:60px;top:161px;font-size:11.5px;line-height:17px;color:#444;font-family:'Liberation Serif', serif;-webkit-text-stroke:0.6px #777;">Slide 14: Ivy Shrimp</div></div></div></div><div class="r" style="left:6.50px;top:75.80px;width:21.60px;height:21.60px;border-radius:50%;background:#7a5a40;box-shadow:0 0 0 1.2px #1e7d32;"></div><div class="r" style="left:29.00px;top:75.80px;width:21.60px;height:21.60px;border-radius:50%;background:#0b57d0;box-shadow:0 0 0 1.2px #fff;"></div><div class="r" style="left:36.30px;top:79.60px;width:7px;height:3.5px;background:rgba(255,255,255,0.75);border-radius:1.5px 1.5px 0 0;"></div></div><div class="t" style="left:9.6px;top:324.25px;font-size:14px;line-height:14px;color:#444746;font-weight:normal;font-family:'Liberation Sans', sans-serif;-webkit-text-stroke:0.3px #444746;">3</div><div class="r" style="left:28.8px;top:419.40px;width:145.6px;height:85.2px;box-sizing:border-box;border:1.2px solid #dfe1e3;border-radius:10px;background:#fff;overflow:hidden;"><div class="r" style="left:2.00px;top:2.40px;width:139px;height:78.2px;border-radius:6px;overflow:hidden;"><div class="r" style="left:0;top:0;width:640px;height:360px;transform:scale(0.21719,0.21722);transform-origin:0 0;"><div class="r" style="left:0;top:0;width:640px;height:360px;background:#fff;overflow:hidden;"><svg class="r" style="left:0;top:0" width="640" height="360" viewBox="0 0 640 360">
<rect x="0" y="0" width="375" height="13" fill="#1a3fe0"/>
<rect x="375" y="0" width="265" height="13" fill="#1f3440"/>
<rect x="0" y="0" width="13" height="199" fill="#1a3fe0"/>
<rect x="0" y="199" width="13" height="161" fill="#146c5c"/>
<rect x="0" y="347" width="266" height="13" fill="#146c5c"/>
<rect x="266" y="347" width="374" height="13" fill="#c4a05b"/>
<rect x="627" y="0" width="13" height="139" fill="#1f3440"/>
<rect x="627" y="139" width="13" height="221" fill="#c4a05b"/>
<g stroke="#1a3fe0" stroke-width="6.5"><line x1="67" y1="70" x2="179" y2="0"/><line x1="78.5" y1="70" x2="190.5" y2="0"/><line x1="90" y1="70" x2="202" y2="0"/><line x1="101.5" y1="70" x2="213.5" y2="0"/></g>
<g stroke="#fff" stroke-width="3"><line x1="140" y1="13" x2="161" y2="0"/><line x1="152" y1="13" x2="173" y2="0"/><line x1="164" y1="13" x2="185" y2="0"/></g>
<g stroke="#1f3440" stroke-width="3.5"><line x1="500" y1="50" x2="593" y2="0"/><line x1="514" y1="52" x2="607" y2="2"/><line x1="528" y1="54" x2="621" y2="4"/></g>
<g stroke="#146c5c" stroke-width="7.5"><line x1="36" y1="350" x2="139" y2="284"/><line x1="71" y1="350" x2="171" y2="284"/><line x1="104" y1="350" x2="206" y2="284"/></g>
<g stroke="#fff" stroke-width="4"><line x1="470" y1="360" x2="490" y2="346"/><line x1="495" y1="360" x2="515" y2="346"/><line x1="520" y1="360" x2="540" y2="346"/></g>
</svg><div class="t" style="left:0;width:640px;text-align:center;top:152px;font-size:53px;line-height:53px;color:#c08a62;">Meals</div></div></div></div><div class="r" style="left:7.10px;top:75.50px;width:21.60px;height:21.60px;border-radius:50%;background:#0f5b45;box-shadow:0 0 0 1.2px #fff;"></div><div class="r" style="left:14.40px;top:79.30px;width:7px;height:3.5px;background:rgba(255,255,255,0.75);border-radius:1.5px 1.5px 0 0;"></div></div><div class="t" style="left:9.6px;top:422.15px;font-size:14px;line-height:14px;color:#444746;font-weight:normal;font-family:'Liberation Sans', sans-serif;-webkit-text-stroke:0.3px #444746;">4</div><div class="r" style="left:28.8px;top:517.00px;width:145.6px;height:85.2px;box-sizing:border-box;border:1.2px solid #dfe1e3;border-radius:10px;background:#fff;overflow:hidden;"><div class="r" style="left:2.00px;top:2.40px;width:139px;height:78.2px;border-radius:6px;overflow:hidden;"><div class="r" style="left:0;top:0;width:640px;height:360px;transform:scale(0.21719,0.21722);transform-origin:0 0;"><div class="r" style="left:0;top:0;width:640px;height:360px;background:#fff;overflow:hidden;box-sizing:border-box;border:14px solid #1f3440;"><div class="t" style="left:15px;top:20px;font-size:17px;line-height:20px;color:#c08a62;font-family:'Liberation Serif', serif;-webkit-text-stroke:0.5px #c08a62;">Recipe Name: Broccoli Penne Pasta<br>Name: Tabitha A.</div><div class="r" style="left:281px;top:12px;width:2px;height:330px;background:#ddd;"></div><div class="r" style="left:15px;top:74px;width:262px;height:2px;background:#e4e4e4;"></div><div class="t" style="left:296px;top:27px;font-size:11px;line-height:14px;color:#333;-webkit-text-stroke:0.4px #333;">Instructions</div><div class="t" style="left:312px;top:58px;font-size:10px;line-height:14px;color:#333;-webkit-text-stroke:0.3px #333;">&#8226;&nbsp;&nbsp;&nbsp;Cook Pasta for 8 mins. 2. Add broccoli and drain the pasta.</div></div></div></div></div><div class="t" style="left:9.6px;top:519.75px;font-size:14px;line-height:14px;color:#444746;font-weight:normal;font-family:'Liberation Sans', sans-serif;-webkit-text-stroke:0.3px #444746;">5</div></div></div><div class="r" style="left:185.5px;top:114.5px;width:7.5px;height:58px;background:#dadce0;border-radius:4px;"></div><div class="r" style="left:213px;top:128px;width:1012px;height:1px;background:#c4c7c5;"></div><div class="r" style="left:408px;top:128px;width:640px;height:1px;background:#6a6a6a;"></div><div class="r" style="left:212px;top:128px;width:1px;height:393px;background:#c4c7c5;"></div><div class="r" style="left:212px;top:146px;width:1px;height:360px;background:#6a6a6a;"></div><svg class="r" style="left:0;top:0" width="1280" height="548" viewBox="0 0 1280 548"><g fill="#8c8c8c"><rect x="408.0" y="124" width="1" height="4"/><rect x="416.0" y="124" width="1" height="4"/><rect x="424.0" y="124" width="1" height="4"/><rect x="432.0" y="124" width="1" height="4"/><rect x="440.0" y="120" width="1" height="8"/><rect x="448.0" y="124" width="1" height="4"/><rect x="456.0" y="124" width="1" height="4"/><rect x="464.0" y="124" width="1" height="4"/><rect x="472.0" y="125" width="1" height="3"/><rect x="480.0" y="124" width="1" height="4"/><rect x="488.0" y="124" width="1" height="4"/><rect x="496.0" y="124" width="1" height="4"/><rect x="504.0" y="120" width="1" height="8"/><rect x="512.0" y="124" width="1" height="4"/><rect x="520.0" y="124" width="1" height="4"/><rect x="528.0" y="124" width="1" height="4"/><rect x="536.0" y="125" width="1" height="3"/><rect x="544.0" y="124" width="1" height="4"/><rect x="552.0" y="124" width="1" height="4"/><rect x="560.0" y="124" width="1" height="4"/><rect x="568.0" y="120" width="1" height="8"/><rect x="576.0" y="124" width="1" height="4"/><rect x="584.0" y="124" width="1" height="4"/><rect x="592.0" y="124" width="1" height="4"/><rect x="600.0" y="125" width="1" height="3"/><rect x="608.0" y="124" width="1" height="4"/><rect x="616.0" y="124" width="1" height="4"/><rect x="624.0" y="124" width="1" height="4"/><rect x="632.0" y="120" width="1" height="8"/><rect x="640.0" y="124" width="1" height="4"/><rect x="648.0" y="124" width="1" height="4"/><rect x="656.0" y="124" width="1" height="4"/><rect x="664.0" y="125" width="1" height="3"/><rect x="672.0" y="124" width="1" height="4"/><rect x="680.0" y="124" width="1" height="4"/><rect x="688.0" y="124" width="1" height="4"/><rect x="696.0" y="120" width="1" height="8"/><rect x="704.0" y="124" width="1" height="4"/><rect x="712.0" y="124" width="1" height="4"/><rect x="720.0" y="124" width="1" height="4"/><rect x="728.0" y="125" width="1" height="3"/><rect x="736.0" y="124" width="1" height="4"/><rect x="744.0" y="124" width="1" height="4"/><rect x="752.0" y="124" width="1" height="4"/><rect x="760.0" y="120" width="1" height="8"/><rect x="768.0" y="124" width="1" height="4"/><rect x="776.0" y="124" width="1" height="4"/><rect x="784.0" y="124" width="1" height="4"/><rect x="792.0" y="125" width="1" height="3"/><rect x="800.0" y="124" width="1" height="4"/><rect x="808.0" y="124" width="1" height="4"/><rect x="816.0" y="124" width="1" height="4"/><rect x="824.0" y="120" width="1" height="8"/><rect x="832.0" y="124" width="1" height="4"/><rect x="840.0" y="124" width="1" height="4"/><rect x="848.0" y="124" width="1" height="4"/><rect x="856.0" y="125" width="1" height="3"/><rect x="864.0" y="124" width="1" height="4"/><rect x="872.0" y="124" width="1" height="4"/><rect x="880.0" y="124" width="1" height="4"/><rect x="888.0" y="120" width="1" height="8"/><rect x="896.0" y="124" width="1" height="4"/><rect x="904.0" y="124" width="1" height="4"/><rect x="912.0" y="124" width="1" height="4"/><rect x="920.0" y="125" width="1" height="3"/><rect x="928.0" y="124" width="1" height="4"/><rect x="936.0" y="124" width="1" height="4"/><rect x="944.0" y="124" width="1" height="4"/><rect x="952.0" y="120" width="1" height="8"/><rect x="960.0" y="124" width="1" height="4"/><rect x="968.0" y="124" width="1" height="4"/><rect x="976.0" y="124" width="1" height="4"/><rect x="984.0" y="125" width="1" height="3"/><rect x="992.0" y="124" width="1" height="4"/><rect x="1000.0" y="124" width="1" height="4"/><rect x="1008.0" y="124" width="1" height="4"/><rect x="1016.0" y="120" width="1" height="8"/><rect x="1024.0" y="124" width="1" height="4"/><rect x="1032.0" y="124" width="1" height="4"/><rect x="1040.0" y="124" width="1" height="4"/></g><g fill="#5b5e61" stroke="#5b5e61" stroke-width="0.35" font-family="Liberation Sans" font-size="10"><text x="471.3" y="123.1" text-anchor="middle">1</text><text x="535.3" y="123.1" text-anchor="middle">2</text><text x="599.3" y="123.1" text-anchor="middle">3</text><text x="663.3" y="123.1" text-anchor="middle">4</text><text x="727.3" y="123.1" text-anchor="middle">5</text><text x="791.3" y="123.1" text-anchor="middle">6</text><text x="855.3" y="123.1" text-anchor="middle">7</text><text x="919.3" y="123.1" text-anchor="middle">8</text><text x="983.3" y="123.1" text-anchor="middle">9</text></g></svg><svg class="r" style="left:0;top:0" width="1280" height="548" viewBox="0 0 1280 548"><g fill="#8c8c8c"><rect x="209" y="146.0" width="4" height="1"/><rect x="209" y="154.0" width="4" height="1"/><rect x="209" y="162.0" width="4" height="1"/><rect x="209" y="170.0" width="4" height="1"/><rect x="205" y="178.0" width="8" height="1"/><rect x="209" y="186.0" width="4" height="1"/><rect x="209" y="194.0" width="4" height="1"/><rect x="209" y="202.0" width="4" height="1"/><rect x="210" y="210.0" width="3" height="1"/><rect x="209" y="218.0" width="4" height="1"/><rect x="209" y="226.0" width="4" height="1"/><rect x="209" y="234.0" width="4" height="1"/><rect x="205" y="242.0" width="8" height="1"/><rect x="209" y="250.0" width="4" height="1"/><rect x="209" y="258.0" width="4" height="1"/><rect x="209" y="266.0" width="4" height="1"/><rect x="210" y="274.0" width="3" height="1"/><rect x="209" y="282.0" width="4" height="1"/><rect x="209" y="290.0" width="4" height="1"/><rect x="209" y="298.0" width="4" height="1"/><rect x="205" y="306.0" width="8" height="1"/><rect x="209" y="314.0" width="4" height="1"/><rect x="209" y="322.0" width="4" height="1"/><rect x="209" y="330.0" width="4" height="1"/><rect x="210" y="338.0" width="3" height="1"/><rect x="209" y="346.0" width="4" height="1"/><rect x="209" y="354.0" width="4" height="1"/><rect x="209" y="362.0" width="4" height="1"/><rect x="205" y="370.0" width="8" height="1"/><rect x="209" y="378.0" width="4" height="1"/><rect x="209" y="386.0" width="4" height="1"/><rect x="209" y="394.0" width="4" height="1"/><rect x="210" y="402.0" width="3" height="1"/><rect x="209" y="410.0" width="4" height="1"/><rect x="209" y="418.0" width="4" height="1"/><rect x="209" y="426.0" width="4" height="1"/><rect x="205" y="434.0" width="8" height="1"/><rect x="209" y="442.0" width="4" height="1"/><rect x="209" y="450.0" width="4" height="1"/><rect x="209" y="458.0" width="4" height="1"/><rect x="210" y="466.0" width="3" height="1"/><rect x="209" y="474.0" width="4" height="1"/><rect x="209" y="482.0" width="4" height="1"/><rect x="209" y="490.0" width="4" height="1"/><rect x="205" y="498.0" width="8" height="1"/><rect x="209" y="506.0" width="4" height="1"/></g><g fill="#6b6e71" stroke="#6b6e71" stroke-width="0.1" font-family="Liberation Sans" font-size="10"><text transform="translate(206.5 210.5) rotate(-90)" text-anchor="middle">1</text><text transform="translate(206.5 274.5) rotate(-90)" text-anchor="middle">2</text><text transform="translate(206.5 338.5) rotate(-90)" text-anchor="middle">3</text><text transform="translate(206.5 402.5) rotate(-90)" text-anchor="middle">4</text><text transform="translate(206.5 466.5) rotate(-90)" text-anchor="middle">5</text></g></svg><div class="r" style="left:696.5px;top:525px;width:46px;height:2px;background:#707070;border-radius:1px;"></div><div class="r" style="left:216px;top:546px;width:1005px;height:20px;background:#edf2fa;border-radius:10px;"></div></div>
</body></html>
